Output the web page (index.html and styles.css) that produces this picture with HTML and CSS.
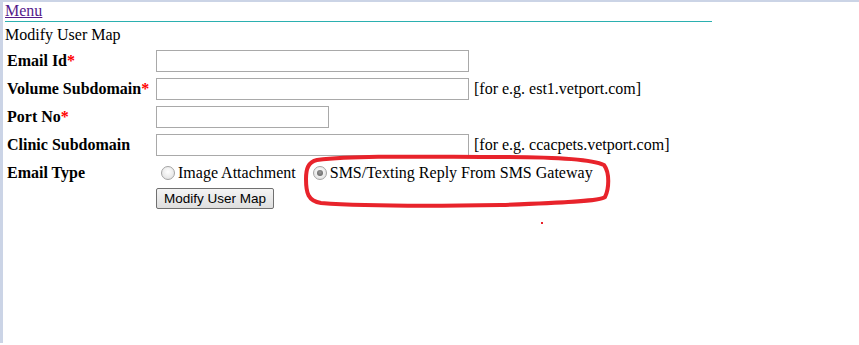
FILE: index.html
```html
<!DOCTYPE html>
<html lang="en">
  <head>
    <meta charset="UTF-8" />
    <title>Modify User Map</title>
    <link rel="stylesheet" href="styles.css">
  </head>
  <body>
    <div class="page">
      <div class="menu-bar">
        <a href="#" class="menu-link">Menu</a>
      </div>
      <div class="title">Modify User Map</div>
      <form class="user-map">
        <label class="field-label">Email Id<span class="req">*</span></label>
        <div class="field"><input type="text" class="txt wide" value=""></div>

        <label class="field-label">Volume Subdomain<span class="req">*</span></label>
        <div class="field"><input type="text" class="txt wide" value=""><span class="hint">[for e.g. est1.vetport.com]</span></div>

        <label class="field-label">Port No<span class="req">*</span></label>
        <div class="field"><input type="text" class="txt short" value=""></div>

        <label class="field-label">Clinic Subdomain</label>
        <div class="field"><input type="text" class="txt wide" value=""><span class="hint">[for e.g. ccacpets.vetport.com]</span></div>

        <label class="field-label">Email Type</label>
        <div class="field radios">
          <label class="opt"><input type="radio" name="emailType"> Image Attachment</label>
          <label class="opt sms"><input type="radio" name="emailType" checked> SMS/Texting Reply From SMS Gateway</label>
        </div>

        <div></div>
        <div class="field btn-row"><button type="button" class="btn">Modify User Map</button></div>
      </form>

      <!-- hand drawn highlight -->
      <svg class="marker" width="320" height="56" viewBox="0 0 320 56">
        <path d="M16 7 C60 2 130 4 200 4 C250 4 290 6 303 12 C309 20 308 36 304 44 C300 48 260 50 200 52 C140 53 60 53 20 50 C7 48 5 40 5 26 C5 16 7 9 16 7 Z" fill="none" stroke="#e8232b" stroke-width="4"/>
      </svg>
      <span class="dot"></span>
    </div>
  </body>
</html>
```

FILE: styles.css
```css
body {
  margin: 0;
  font-family: "Liberation Serif", "Times New Roman", serif;
  font-size: 16px;
  color: #000;
  background: #fff;
  border-left: 3px solid #cbd4e6;
  border-top: 2px solid #cbd4e6;
  height: 343px;
  box-sizing: border-box;
}
.page {
  position: relative;
  padding: 0 0 0 2px;
}
.menu-bar {
  width: 707px;
  height: 19px;
  border-bottom: 1px solid #2bb0b0;
  line-height: 18px;
}
.menu-link {
  color: #551a8b;
  font-size: 16px;
}
.title {
  margin-top: 4px;
  line-height: 18px;
}
.user-map {
  display: grid;
  grid-template-columns: 151px auto;
  grid-auto-rows: 28px;
  margin-top: 3px;
}
.field-label {
  font-weight: bold;
  font-size: 16px;
  padding-left: 2px;
  display: flex;
  align-items: center;
}
.req {
  color: #ff0000;
}
.field {
  display: flex;
  align-items: center;
}
.txt {
  height: 22px;
  box-sizing: border-box;
  border: 1px solid #a9a9a9;
  margin: 0;
  padding: 1px 2px;
  font-family: "Liberation Sans", Arial, sans-serif;
  font-size: 13px;
}
.wide {
  width: 313px;
}
.short {
  width: 173px;
}
.hint {
  margin-left: 5px;
  font-size: 16px;
}
.radios {
  gap: 12px;
}
.opt {
  display: flex;
  align-items: center;
}
.opt input {
  appearance: none;
  -webkit-appearance: none;
  margin: 0 3px 0 5px;
  width: 14px;
  height: 14px;
  border: 1px solid #a4a4a4;
  border-radius: 50%;
  background: radial-gradient(circle at 50% 40%, #ffffff, #dcdcdc);
  box-sizing: border-box;
  position: relative;
}
.opt input:checked::after {
  content: "";
  position: absolute;
  left: 3px;
  top: 3px;
  width: 6px;
  height: 6px;
  border-radius: 50%;
  background: radial-gradient(circle at 50% 40%, #9a9a9a, #5a5a5a);
}
.btn-row {
  align-items: flex-start;
  padding-top: 1px;
}
.btn {
  height: 21px;
  padding: 0 7px;
  font-family: "Liberation Sans", Arial, sans-serif;
  font-size: 13.5px;
  color: #000;
  background: linear-gradient(#f4f4f4, #dedede);
  border: 1px solid #707070;
  border-radius: 2px;
}
.marker {
  position: absolute;
  left: 298px;
  top: 151px;
}
.dot {
  position: absolute;
  left: 538px;
  top: 220px;
  width: 2px;
  height: 2px;
  background: #e8232b;
}
```
